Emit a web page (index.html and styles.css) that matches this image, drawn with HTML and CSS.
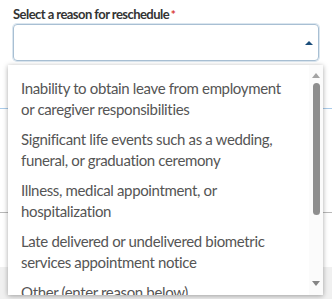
FILE: index.html
```html
<!DOCTYPE html>
<html>
<head>
<meta charset="utf-8">
<link rel="stylesheet" href="styles.css">
</head>
<body>
<div class="page">
  <div class="form">
    <div class="label">Select a reason for reschedule <span class="req">*</span></div>
    <div class="select"><span class="caret"></span></div>
  </div>
  <div class="rule rule-blue"></div>
  <div class="rule rule-gray"></div>
  <div class="footer"></div>

  <div class="menu">
    <ul class="options">
      <li>Inability to obtain leave from employment or caregiver responsibilities</li>
      <li>Significant life events such as a wedding, funeral, or graduation ceremony</li>
      <li>Illness, medical appointment, or hospitalization</li>
      <li>Late delivered or undelivered biometric services appointment notice</li>
      <li>Other (enter reason below)</li>
    </ul>
    <div class="scrollbar">
      <span class="arrow arrow-up"></span>
      <span class="thumb"></span>
      <span class="arrow arrow-down"></span>
    </div>
  </div>
</div>
</body>
</html>
```
FILE: styles.css
```css
html, body {
  margin: 0;
  padding: 0;
  background: #ffffff;
}
.page {
  position: relative;
  width: 332px;
  height: 299px;
  overflow: hidden;
  font-family: Lato, "Liberation Sans", sans-serif;
  display: flex;
  flex-direction: column;
}
.form {
  padding: 5px 13px 0 13px;
}
.label {
  font-size: 13px;
  line-height: 18px;
  font-weight: 700;
  letter-spacing: -0.55px;
  color: #333333;
  height: 18px;
}
.req {
  color: #d83933;
  font-size: 12px;
  margin-left: -1px;
}
.select {
  margin-top: 1px;
  box-sizing: border-box;
  width: 306px;
  height: 37px;
  border: 1px solid #a8bfd3;
  border-radius: 4px;
  box-shadow: 0 0 0 1px #dbe6ef;
  display: flex;
  align-items: center;
  justify-content: flex-end;
  padding-right: 5px;
}
.caret {
  width: 0;
  height: 0;
  border-left: 4px solid transparent;
  border-right: 4px solid transparent;
  border-bottom: 4px solid #1b4d7a;
  margin-top: 1px;
}
.rule {
  height: 1px;
  flex: none;
}
.rule-blue {
  margin-top: 47px;
  background: #a9cbea;
}
.rule-gray {
  margin-top: 103px;
  background: #b8b8b8;
}
.footer {
  margin-top: 54px;
  flex: 1;
  background: #f0f0f0;
}
.menu {
  position: absolute;
  left: 8px;
  top: 65px;
  width: 315px;
  height: 230px;
  background: #ffffff;
  box-shadow: 0 1px 5px rgba(0, 0, 0, 0.35);
  display: flex;
  overflow: hidden;
}
.options {
  flex: 1;
  list-style: none;
  margin: 0;
  padding: 8px 0 0 0;
  overflow: hidden;
}
.options li {
  padding: 4.5px 14px 4.5px 13px;
  font-size: 15px;
  line-height: 21px;
  letter-spacing: -0.35px;
  color: #555555;
}
.scrollbar {
  width: 14px;
  flex: none;
  display: flex;
  flex-direction: column;
  align-items: center;
  background: #fbfbfb;
  padding-top: 8px;
  box-sizing: border-box;
}
.arrow {
  width: 0;
  height: 0;
  border-left: 4px solid transparent;
  border-right: 4px solid transparent;
}
.arrow-up {
  border-bottom: 5px solid #a3a3a3;
}
.arrow-down {
  border-top: 5px solid #858585;
  margin-top: 66px;
}
.thumb {
  margin-top: 5px;
  width: 7px;
  height: 132px;
  border-radius: 4px;
  background: #8e8e8e;
}
```
